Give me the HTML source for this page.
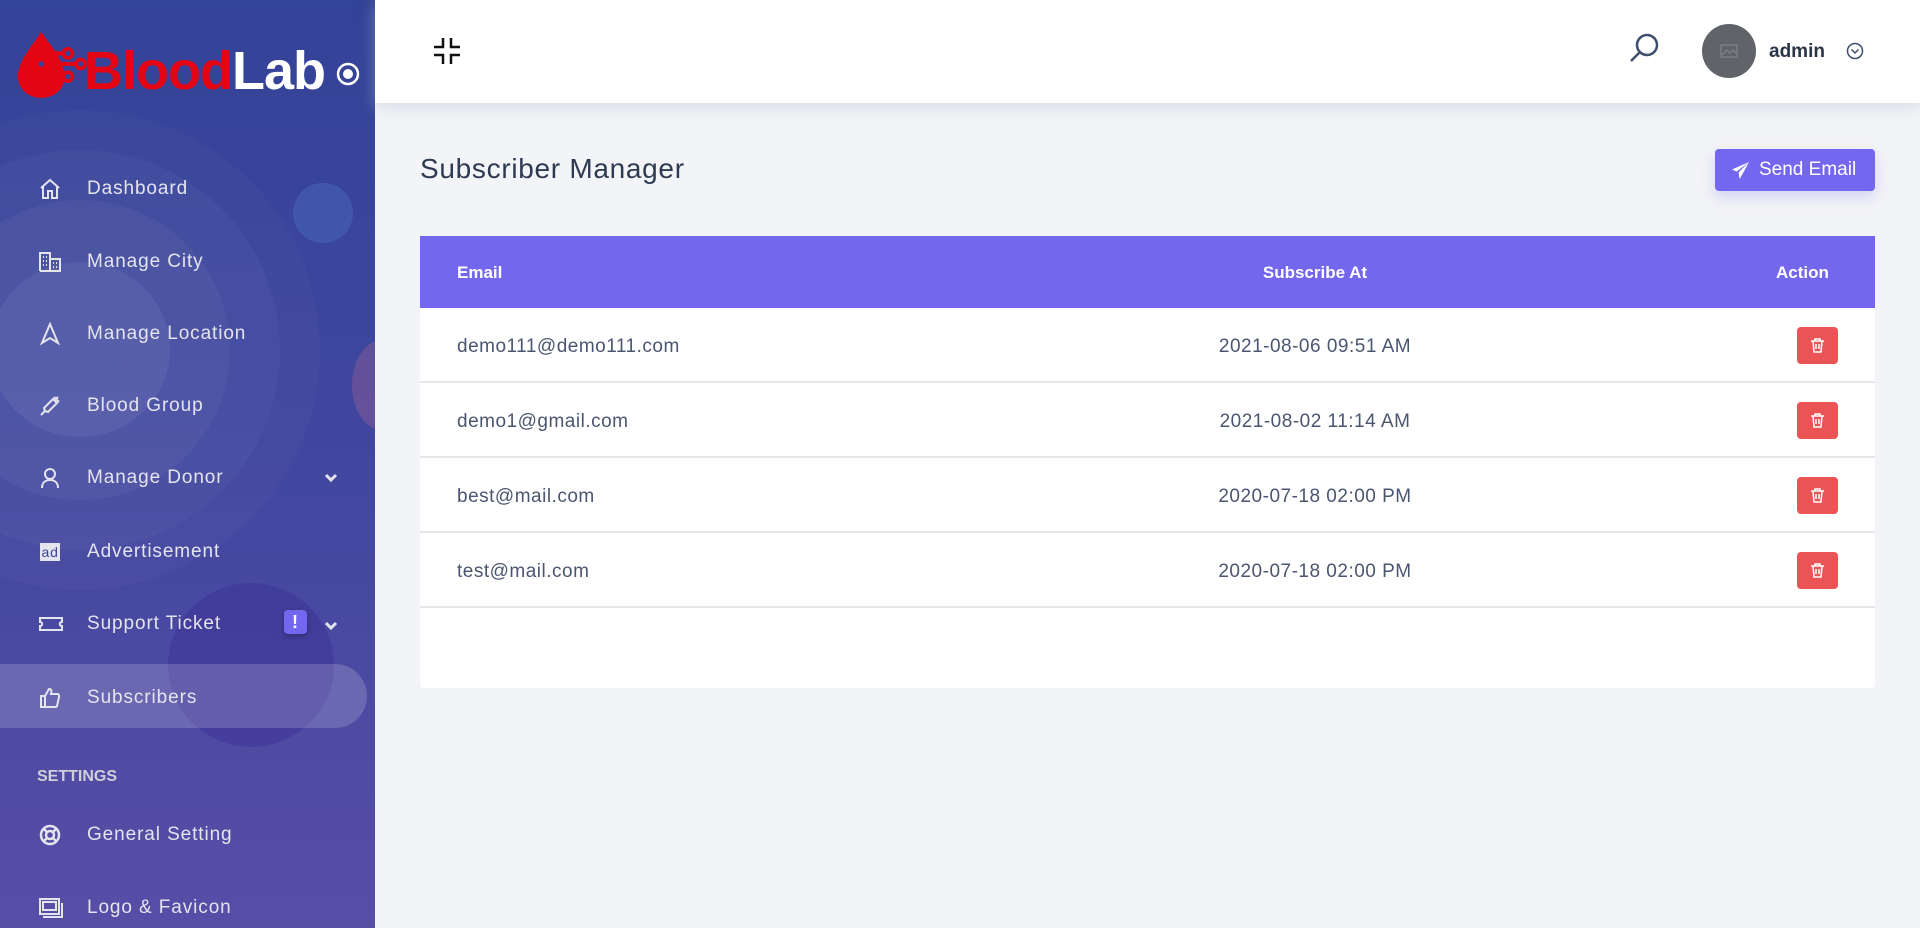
<!DOCTYPE html>
<html><head><meta charset="utf-8"><style>
*{box-sizing:border-box;margin:0;padding:0}
body{width:1920px;height:928px;overflow:hidden;background:#f3f4f7;font-family:"Liberation Sans",sans-serif;position:relative}
.sb{position:absolute;left:0;top:0;width:375px;height:928px;background:linear-gradient(180deg,#334397 0%,#3f469e 45%,#574ea6 100%);overflow:hidden}
.c{position:absolute;border-radius:50%}
.logo{position:absolute;left:84px;top:41px;font-size:54px;font-weight:bold;letter-spacing:-1px;line-height:60px}
.mi{position:absolute;left:0;width:375px;height:40px;color:#e4e4ee;font-size:19px;letter-spacing:0.9px}
.mi span{position:absolute;left:87px;top:11px}
.mi svg{position:absolute;left:38px;top:10px}
.act{position:absolute;left:0;top:664px;width:367px;height:64px;background:rgba(255,255,255,0.17);border-radius:0 32px 32px 0}
.hdr{position:absolute;left:375px;top:0;width:1545px;height:103px;background:#fff;box-shadow:0 4px 14px rgba(180,190,215,.45)}
.card{position:absolute;left:420px;top:236px;width:1455px;height:452px;background:#fff;border-radius:0 0 4px 4px}
.th{height:72px;background:#7367ee;color:#fff;font-weight:bold;font-size:17px;position:relative}
.row{height:75px;border-bottom:2px solid #e6e6e9;position:relative;color:#4a5670;font-size:19px;letter-spacing:0.5px}
.row .e{position:absolute;left:37px;top:28px}
.row .d,.th .d{position:absolute;left:0;width:1790px;text-align:center;top:28px}
.del{position:absolute;left:1377px;top:19px;width:41px;height:37px;background:#ea5455;border-radius:4px}
.del svg{position:absolute;left:13px;top:11px}
</style></head><body>
<div class="sb">
 <div class="c" style="left:-160px;top:110px;width:480px;height:480px;background:rgba(255,255,255,.025)"></div>
 <div class="c" style="left:-120px;top:150px;width:400px;height:400px;background:rgba(255,255,255,.03)"></div>
 <div class="c" style="left:-70px;top:200px;width:300px;height:300px;background:rgba(255,255,255,.04)"></div>
 <div class="c" style="left:-10px;top:262px;width:180px;height:175px;background:rgba(255,255,255,.06)"></div>
 <div class="c" style="left:293px;top:183px;width:60px;height:60px;background:rgba(80,120,200,.35)"></div>
 <div class="c" style="left:352px;top:340px;width:60px;height:90px;background:rgba(170,100,150,.35)"></div>
 <div class="c" style="left:168px;top:583px;width:166px;height:164px;background:rgba(60,50,150,.5)"></div>
 <div class="logo"><span style="color:#e30513">Blood</span><span style="color:#fff">Lab</span></div>
 <svg style="position:absolute;left:13px;top:30px" width="80" height="70" viewBox="0 0 70 66"><path d="M24 2 C14 16 2 30 2 44 C2 56 12 64 24 64 C36 64 46 56 46 44 C46 30 34 16 24 2Z" fill="#e30513"/><g stroke="#e30513" stroke-width="4" fill="none"><path d="M22 22 H46"/><path d="M22 32 H58"/><path d="M28 42 H46"/></g><g fill="#e30513"><circle cx="49" cy="22" r="6"/><circle cx="61" cy="32" r="6"/><circle cx="49" cy="44" r="6"/></g><g fill="#334397"><circle cx="49" cy="22" r="2.5"/><circle cx="61" cy="32" r="2.5"/><circle cx="49" cy="44" r="2.5"/><circle cx="24" cy="32" r="2.5"/></g></svg>
 <svg style="position:absolute;left:336px;top:62px" width="24" height="24"><circle cx="12" cy="12" r="10" stroke="#fff" stroke-width="2.5" fill="none"/><circle cx="12" cy="12" r="5" fill="#fff"/></svg>
 <div class="act"></div>
 <div class="mi" style="top:167px"><svg width="24" height="24" viewBox="0 0 24 24" fill="none" stroke="#e4e4ee" stroke-width="2"><path d="M3 11 L12 3 L21 11 M5 9 V21 H10 V14 H14 V21 H19 V9"/></svg><span>Dashboard</span></div>
 <div class="mi" style="top:240px"><svg width="24" height="24" viewBox="0 0 24 24" fill="none" stroke="#e4e4ee" stroke-width="2"><path d="M2 21 V3 H12 V21 M12 9 H22 V21 H2 M5 7h1M8 7h1M5 11h1M8 11h1M5 15h1M8 15h1M15 13h1M18 13h1M15 17h1M18 17h1"/></svg><span>Manage City</span></div>
 <div class="mi" style="top:312px"><svg width="24" height="24" viewBox="0 0 24 24" fill="none" stroke="#e4e4ee" stroke-width="2"><path d="M12 2 L4 21 L12 16 L20 21Z"/></svg><span>Manage Location</span></div>
 <div class="mi" style="top:384px"><svg width="24" height="24" viewBox="0 0 24 24" fill="none" stroke="#e4e4ee" stroke-width="2"><path d="M3 21 L7 17 M7 17 L6 14 L15 5 L19 9 L10 18Z M16 3 L21 8 M18 5 L20 3"/></svg><span>Blood Group</span></div>
 <div class="mi" style="top:456px"><svg width="24" height="24" viewBox="0 0 24 24" fill="none" stroke="#e4e4ee" stroke-width="2"><circle cx="12" cy="8" r="5"/><path d="M4 22 C4 16 8 14 12 14 C16 14 20 16 20 22"/></svg><span>Manage Donor</span><svg style="left:323px;top:14px" width="16" height="16" viewBox="0 0 16 16"><path d="M3 5 L8 10 L13 5" stroke="#e4e4ee" stroke-width="3" fill="none"/></svg></div>
 <div class="mi" style="top:530px"><svg width="24" height="24" viewBox="0 0 24 24"><rect x="2" y="3" width="20" height="18" fill="#e4e4ee"/><text x="3.5" y="17" font-size="14" font-family="Liberation Sans" fill="#3d469e">ad</text></svg><span>Advertisement</span></div>
 <div class="mi" style="top:602px"><svg width="26" height="24" viewBox="0 0 26 24" fill="none" stroke="#e4e4ee" stroke-width="2"><path d="M2 6 H24 V10 C21 10 21 14 24 14 V18 H2 V14 C5 14 5 10 2 10Z"/></svg><span>Support Ticket</span><div style="position:absolute;left:284px;top:8px;width:23px;height:24px;background:#7367f0;border-radius:4px;box-shadow:0 2px 6px rgba(0,0,0,.3);color:#fff;font-weight:bold;text-align:center;font-size:18px;line-height:24px">!</div><svg style="left:323px;top:16px" width="16" height="16" viewBox="0 0 16 16"><path d="M3 5 L8 10 L13 5" stroke="#e4e4ee" stroke-width="3" fill="none"/></svg></div>
 <div class="mi" style="top:676px"><svg width="24" height="24" viewBox="0 0 24 24" fill="none" stroke="#e4e4ee" stroke-width="2"><path d="M3 10 H7 V21 H3Z M7 10 L11 3 C13 3 14 4 13 8 H20 C21 8 21 10 21 11 L19 20 C19 21 18 21 17 21 H7"/></svg><span>Subscribers</span></div>
 <div style="position:absolute;left:37px;top:768px;color:#cfcfdc;font-weight:bold;font-size:16px">SETTINGS</div>
 <div class="mi" style="top:813px"><svg width="24" height="24" viewBox="0 0 24 24" fill="none" stroke="#e4e4ee" stroke-width="2.5"><circle cx="12" cy="12" r="9"/><circle cx="12" cy="12" r="4"/><path d="M6 6 L9 9M18 6 L15 9M6 18 L9 15M18 18 L15 15"/></svg><span>General Setting</span></div>
 <div class="mi" style="top:886px"><svg width="26" height="24" viewBox="0 0 26 24" fill="none" stroke="#e4e4ee" stroke-width="2"><rect x="2" y="3" width="19" height="15"/><rect x="5" y="6" width="13" height="8"/><path d="M5 21 H24 V7"/></svg><span>Logo &amp; Favicon</span></div>
</div>
<div class="hdr">
 <svg style="position:absolute;left:58px;top:37px" width="28" height="28" viewBox="0 0 28 28" fill="none" stroke="#111" stroke-width="2.5"><path d="M10 1 V10 H1 M18 1 V10 H27 M1 18 H10 V27 M27 18 H18 V27"/></svg>
 <svg style="position:absolute;left:1253px;top:32px" width="32" height="32" viewBox="0 0 32 32" fill="none" stroke="#3c4e6e" stroke-width="2.5"><circle cx="19" cy="13" r="10"/><path d="M12 20 L3 29"/></svg>
 <div style="position:absolute;left:1327px;top:24px;width:54px;height:54px;border-radius:50%;background:#606468"><svg style="position:absolute;left:18px;top:20px" width="18" height="14" viewBox="0 0 18 14" fill="none" stroke="#7a7e83" stroke-width="1.5"><rect x="1" y="1" width="16" height="12"/><path d="M2 11 L7 6 L10 9 L13 6 L16 9"/></svg></div>
 <div style="position:absolute;left:1394px;top:41px;font-weight:bold;font-size:19px;color:#2b3548">admin</div>
 <svg style="position:absolute;left:1471px;top:42px" width="18" height="18" viewBox="0 0 18 18" fill="none" stroke="#3c4e6e" stroke-width="1.5"><circle cx="9" cy="9" r="7.5"/><path d="M5.5 7.5 L9 11 L12.5 7.5"/></svg>
</div>
<div style="position:absolute;left:420px;top:153px;font-size:28px;letter-spacing:0.7px;color:#2e3a52">Subscriber Manager</div>
<div style="position:absolute;left:1715px;top:149px;width:160px;height:42px;background:#7367f0;border-radius:4px;box-shadow:0 6px 14px rgba(115,103,240,.25);color:#fff;font-size:19px">
 <svg style="position:absolute;left:16px;top:12px" width="19" height="19" viewBox="0 0 20 20" fill="#fff"><path d="M19 1 L1 9 L6 11 Z M19 1 L8 12 L9 19 L12 14Z"/></svg>
 <span style="position:absolute;left:44px;top:10px">Send Email</span></div>
<div class="card">
 <div class="th"><span style="position:absolute;left:37px;top:27px">Email</span><span class="d" style="top:27px">Subscribe At</span><span style="position:absolute;left:1356px;top:27px">Action</span></div>
 <div class="row"><span class="e">demo111@demo111.com</span><span class="d">2021-08-06 09:51 AM</span><div class="del"><svg width="15" height="15" viewBox="0 0 15 15" fill="none" stroke="#fff" stroke-width="1.5"><path d="M1 3 H14 M5 3 V1 H10 V3 M3 3 L4 14 H11 L12 3 M6 6 V11 M9 6 V11"/></svg></div></div>
 <div class="row"><span class="e">demo1@gmail.com</span><span class="d">2021-08-02 11:14 AM</span><div class="del"><svg width="15" height="15" viewBox="0 0 15 15" fill="none" stroke="#fff" stroke-width="1.5"><path d="M1 3 H14 M5 3 V1 H10 V3 M3 3 L4 14 H11 L12 3 M6 6 V11 M9 6 V11"/></svg></div></div>
 <div class="row"><span class="e">best@mail.com</span><span class="d">2020-07-18 02:00 PM</span><div class="del"><svg width="15" height="15" viewBox="0 0 15 15" fill="none" stroke="#fff" stroke-width="1.5"><path d="M1 3 H14 M5 3 V1 H10 V3 M3 3 L4 14 H11 L12 3 M6 6 V11 M9 6 V11"/></svg></div></div>
 <div class="row"><span class="e">test@mail.com</span><span class="d">2020-07-18 02:00 PM</span><div class="del"><svg width="15" height="15" viewBox="0 0 15 15" fill="none" stroke="#fff" stroke-width="1.5"><path d="M1 3 H14 M5 3 V1 H10 V3 M3 3 L4 14 H11 L12 3 M6 6 V11 M9 6 V11"/></svg></div></div>
</div>
</body></html>
